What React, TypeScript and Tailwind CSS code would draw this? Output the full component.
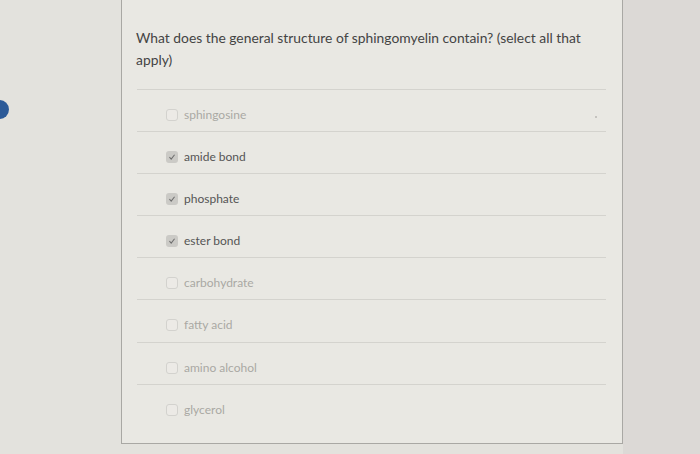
const options = [
  { label: "sphingosine", checked: false },
  { label: "amide bond", checked: true },
  { label: "phosphate", checked: true },
  { label: "ester bond", checked: true },
  { label: "carbohydrate", checked: false },
  { label: "fatty acid", checked: false },
  { label: "amino alcohol", checked: false },
  { label: "glycerol", checked: false },
];

function Box({ checked }: { checked: boolean }) {
  if (checked) {
    return (
      <span className="flex h-[12px] w-[12px] items-center justify-center rounded-[3px] bg-[#cbcac6]">
        <svg viewBox="0 0 10 10" className="h-[8px] w-[8px]">
          <path d="M1.8 5.2 L4 7.6 L8.2 2.2" fill="none" stroke="#6e6e6e" strokeWidth="1.3" />
        </svg>
      </span>
    );
  }
  return <span className="h-[12px] w-[12px] rounded-[3px] border border-[#d3d2ce] bg-[#eceae6]" />;
}

export default function App() {
  return (
    <div className="flex h-[454px] w-[700px] overflow-hidden bg-[#e3e2dd] font-['Lato','Liberation_Sans',sans-serif]">
      {/* left gutter */}
      <div className="w-[121px] shrink-0 pt-[100px]">
        <div className="-ml-[10px] h-[19px] w-[19px] rounded-full bg-[#2c5a98]" />
      </div>

      {/* question card */}
      <div className="h-[444px] w-[502px] shrink-0 border-x border-b border-[#a9a8a4] bg-[#e9e8e3]">
        <p className="w-[470px] pl-[14px] pt-[27px] text-[13.85px] leading-[22px] text-[#444444]">
          What does the general structure of sphingomyelin contain? (select all that apply)
        </p>

        <div className="mt-[18px] ml-[15px] w-[469px]">
          {options.map((o, i) => (
            <div key={o.label} className="flex h-[42.1px] border-t border-[#d4d3ce] pt-[17px] pl-[29px]">
              <div className="flex h-[16px] items-center gap-[6px]">
                <Box checked={o.checked} />
                <span className={`text-[12px] leading-[16px] ${o.checked ? "text-[#555555]" : "text-[#a9a8a4]"}`}>
                  {o.label}
                </span>
              </div>
              {i === 0 && <span className="ml-auto mr-[9px] mt-[9px] h-[2px] w-[2px] rounded-full bg-[#b8b7b3]" />}
            </div>
          ))}
        </div>
      </div>

      <div className="flex-1 bg-[#dcd9d6]" />
    </div>
  );
}
